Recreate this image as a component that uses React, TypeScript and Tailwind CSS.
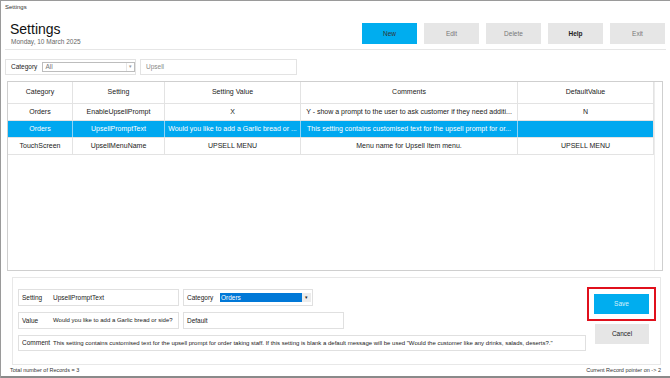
import React from 'react'

const rows = [
  {
    category: 'Orders',
    setting: 'EnableUpsellPrompt',
    value: 'X',
    comments: 'Y - show a prompt to the user to ask customer if they need additi...',
    def: 'N',
  },
  {
    category: 'Orders',
    setting: 'UpsellPromptText',
    value: 'Would you like to add a Garlic bread or ...',
    comments: 'This setting contains customised text for the upsell prompt for or...',
    def: '',
  },
  {
    category: 'TouchScreen',
    setting: 'UpsellMenuName',
    value: 'UPSELL MENU',
    comments: 'Menu name for Upsell Item menu.',
    def: 'UPSELL MENU',
  },
]

const cols = ['w-[65px]', 'w-[92px]', 'w-[136px]', 'w-[217px]', 'w-[135px]']

export default function App() {
  const selected = 1

  return (
    <div className="w-[670px] h-[378px] bg-white border-t border-l border-[#9a9a9a] flex flex-col font-['Liberation_Sans',Arial,sans-serif] text-[#222] overflow-hidden">
      {/* title bar */}
      <div className="h-[13px] pl-[4px] flex items-center text-[6px] text-[#333]">Settings</div>

      {/* header */}
      <div className="h-[36px] mx-[4px] flex justify-between items-start border-b border-[#e6e6e6]">
        <div className="pl-[5px] pt-[8px]">
          <h1 className="text-[14px] leading-[15px] text-[#111]">Settings</h1>
          <div className="text-[6.5px] leading-[8px] text-[#666] pl-[1px] mt-[1px]">Monday, 10 March 2025</div>
        </div>
        <div className="flex gap-[7px] pt-[9px] pr-[1px]">
          <button className="w-[55px] h-[21px] bg-[#00adef] text-[6.5px] text-[#333]">New</button>
          <button className="w-[55px] h-[21px] bg-[#e6e6e6] text-[6.5px] text-[#777]">Edit</button>
          <button className="w-[55px] h-[21px] bg-[#e6e6e6] text-[6.5px] text-[#777]">Delete</button>
          <button className="w-[55px] h-[21px] bg-[#e6e6e6] text-[6.5px] text-[#222] font-bold">Help</button>
          <button className="w-[55px] h-[21px] bg-[#e6e6e6] text-[6.5px] text-[#777]">Exit</button>
        </div>
      </div>

      {/* filter */}
      <div className="mt-[9px] ml-[4px] flex gap-[4px] h-[16px]">
        <div className="w-[131px] border border-[#e3e3e3] flex items-center pl-[5px] gap-[5px]">
          <span className="text-[6.5px]">Category</span>
          <div className="w-[93px] h-[10px] border border-[#bdbdbd] flex items-center justify-between">
            <span className="pl-[2px] text-[6.5px] text-[#777]">All</span>
            <span className="w-[8px] h-full border-l border-[#e6e6e6] flex items-center justify-center text-[5px] text-[#999]">▾</span>
          </div>
        </div>
        <div className="w-[157px] border border-[#e3e3e3] flex items-center pl-[5px] text-[6.5px] text-[#888]">Upsell</div>
      </div>

      {/* grid */}
      <div className="mt-[6px] ml-[6px] w-[656px] h-[190px] border border-[#cfcfcf] flex">
        <div className="w-[646px] flex flex-col">
          <div className="flex h-[22px] border-b border-r border-[#e3e3e3] text-[7px]">
            {['Category', 'Setting', 'Setting Value', 'Comments', 'DefaultValue'].map((h, i) => (
              <div key={h} className={`${cols[i]} flex items-center justify-center ${i < 4 ? 'border-r border-[#e3e3e3]' : ''}`}>
                {h}
              </div>
            ))}
          </div>
          {rows.map((r, idx) => {
            const sel = idx === selected
            const cells = [r.category, r.setting, r.value, r.comments, r.def]
            return (
              <div
                key={idx}
                className={`flex h-[17px] border-b border-r border-[#e3e3e3] text-[7px] ${sel ? 'bg-[#00a8f0] text-white' : ''}`}
              >
                {cells.map((c, i) => (
                  <div
                    key={i}
                    className={`${cols[i]} flex items-center justify-center px-[2px] whitespace-nowrap overflow-hidden ${i < 4 ? (sel ? 'border-r border-[#8fd3f5]' : 'border-r border-[#e3e3e3]') : ''}`}
                  >
                    {c}
                  </div>
                ))}
              </div>
            )
          })}
        </div>
        <div className="flex-1 border-l border-[#ececec]" />
      </div>

      {/* edit panel */}
      <div className="mt-[6px] ml-[11px] w-[649px] h-[88px] border border-[#e8e8e8] flex pl-[5px] pt-[9px]">
        <div className="w-[568px] flex flex-col gap-[6px] pt-[2px] text-[6px]">
          <div className="flex gap-[4px]">
            <div className="w-[161px] h-[17px] border border-[#e0e0e0] flex items-center pl-[3px]">
              <span className="w-[31px] text-[6.5px]">Setting</span>
              <span className="text-[6.5px]">UpsellPromptText</span>
            </div>
            <div className="w-[130px] h-[17px] border border-[#e0e0e0] flex items-center pl-[3px]">
              <span className="w-[33px] text-[6.5px]">Category</span>
              <span className="w-[82px] h-[9px] bg-[#0078d7] text-white flex items-center pl-[1px] text-[6.5px]">Orders</span>
              <span className="w-[9px] h-[9px] bg-[#ececec] flex items-center justify-center text-[5px] text-[#222]">▾</span>
            </div>
          </div>
          <div className="flex gap-[4px]">
            <div className="w-[161px] h-[17px] border border-[#e0e0e0] flex items-center pl-[3px]">
              <span className="w-[31px] text-[6.5px]">Value</span>
              <span>Would you like to add a Garlic bread or side?</span>
            </div>
            <div className="w-[161px] h-[17px] border border-[#e0e0e0] flex items-center pl-[3px] text-[6.5px]">Default</div>
          </div>
          <div className="w-[568px] h-[16px] border border-[#e0e0e0] flex items-center pl-[3px] whitespace-nowrap overflow-hidden">
            <span className="w-[31px] shrink-0 text-[6.5px]">Comment</span>
            <span>
              This setting contains customised text for the upsell prompt for order taking staff. If this setting is blank a default message will be used "Would the customer like any drinks, salads, deserts?."
            </span>
          </div>
        </div>
        <div className="ml-[1px] flex flex-col gap-[3px]">
          <div className="w-[69px] h-[34px] border-2 border-[#e0101c] flex items-center justify-center">
            <button className="w-[55px] h-[20px] bg-[#00adef] text-[6.5px] text-[#d8f1fb]">Save</button>
          </div>
          <button className="ml-[8px] w-[54px] h-[20px] bg-[#e6e6e6] text-[6.5px] text-[#222]">Cancel</button>
        </div>
      </div>

      {/* status */}
      <div className="flex-1 flex items-end justify-between px-[9px] pb-[2px] text-[5.5px] text-[#333] border-b-2 border-[#8a8a8a]">
        <span>Total number of Records = 3</span>
        <span>Current Record pointer on -&gt; 2</span>
      </div>
    </div>
  )
}
